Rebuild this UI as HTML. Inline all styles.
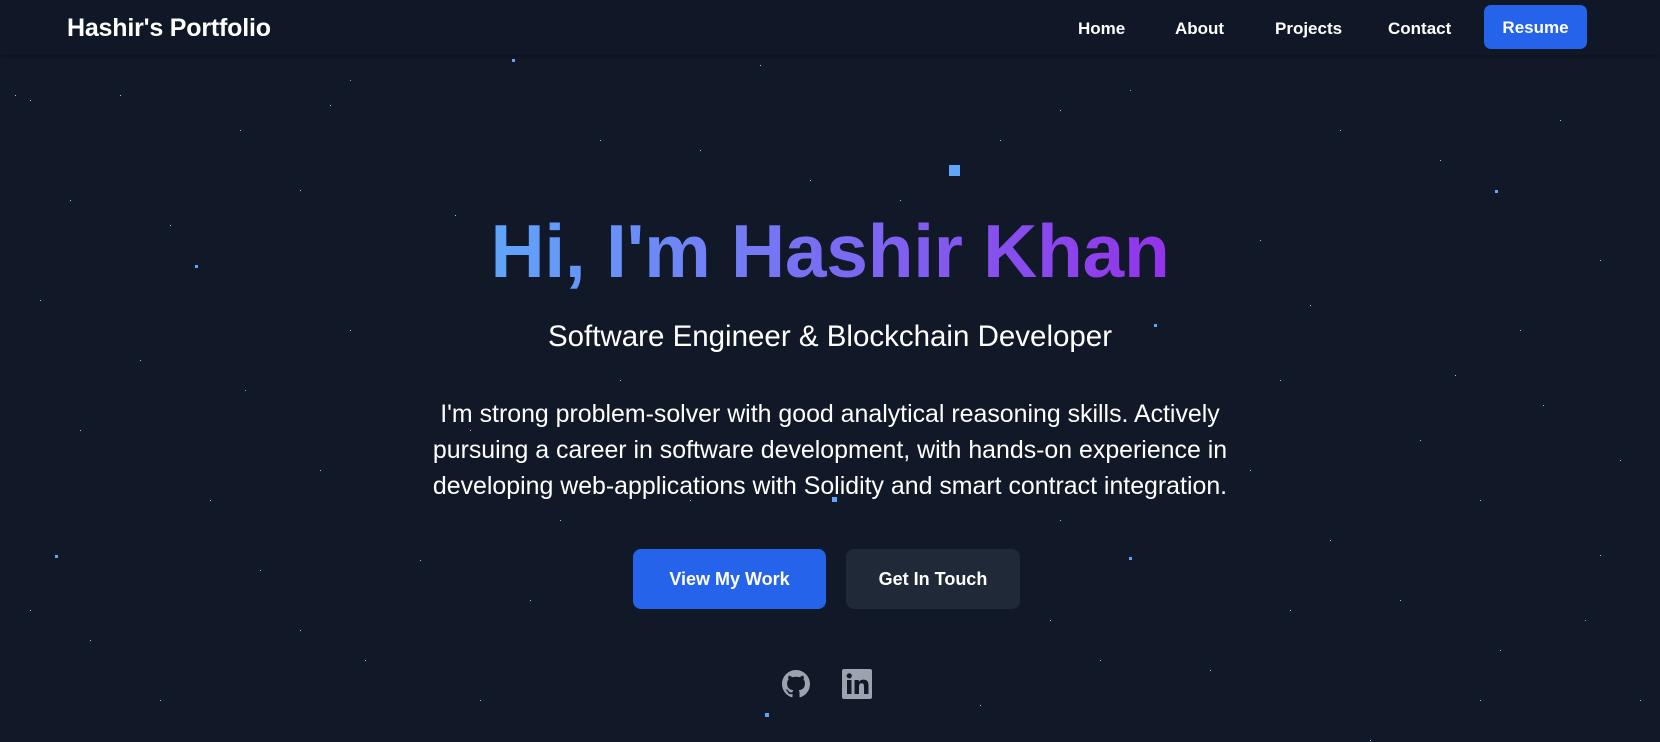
<!DOCTYPE html>
<html><head><meta charset="utf-8"><style>
*{margin:0;padding:0;box-sizing:border-box}
body{width:1660px;height:742px;overflow:hidden;background:#111827;font-family:"Liberation Sans",sans-serif;color:#fff;position:relative}
nav{position:absolute;top:0;left:0;width:1660px;height:55px;background:#101828;box-shadow:0 1px 3px rgba(0,0,0,.3)}
.logo{position:absolute;left:67px;top:14px;font-size:25px;font-weight:700;letter-spacing:-0.2px}
.nl{position:absolute;top:19px;font-size:17px;font-weight:600}
.res{position:absolute;left:1484px;top:5px;width:103px;height:44px;background:#2563eb;border-radius:7px;font-size:17px;font-weight:600;text-align:center;line-height:46px}
.stars{position:absolute;left:0;top:0;width:1px;height:1px;background:transparent}
h1{position:absolute;left:0;width:1660px;top:206px;text-align:center;font-size:75px;font-weight:700;letter-spacing:-0.3px;line-height:90px}
h1 span{background:linear-gradient(90deg,#60a5fa,#9333ea);-webkit-background-clip:text;background-clip:text;color:transparent}
.sub{position:absolute;left:0;width:1660px;top:319px;text-align:center;font-size:29.5px;line-height:36px}
.p{position:absolute;left:280px;width:1100px;top:396px;text-align:center;font-size:24.9px;line-height:36px}
.btn{position:absolute;top:549px;height:60px;border-radius:8px;font-size:18px;font-weight:700;text-align:center;line-height:60px}
</style></head><body>
<div class="stars" style="box-shadow:
513px 60px 0 1px #60a5fa,120px 95px #93c5fd,240px 130px #93c5fd,30px 100px #93c5fd,350px 80px #60a5fa,760px 65px #93c5fd,900px 200px #93c5fd,1130px 90px #60a5fa,1496px 191px 0 1px #60a5fa,196px 266px 0 1px #60a5fa,455px 215px #93c5fd,170px 225px #93c5fd,1155px 325px 0 1px #60a5fa,1310px 305px #93c5fd,1455px 375px #93c5fd,1543px 405px #93c5fd,245px 390px #60a5fa,80px 430px #93c5fd,320px 470px #93c5fd,1250px 470px #93c5fd,1480px 500px #93c5fd,1130px 558px 0 1px #60a5fa,56px 556px 0 1px #60a5fa,1600px 555px #93c5fd,1585px 620px #60a5fa,1370px 740px #93c5fd,90px 640px #93c5fd,365px 660px #93c5fd,530px 600px #93c5fd,1050px 620px #93c5fd,1210px 670px #93c5fd,700px 150px #93c5fd,1000px 140px #93c5fd,1340px 130px #93c5fd,1600px 260px #93c5fd,620px 380px #93c5fd,1400px 600px #93c5fd,260px 570px #93c5fd,160px 700px #93c5fd,980px 705px #93c5fd,1480px 700px #93c5fd,40px 300px #93c5fd,1560px 120px #93c5fd,300px 190px #93c5fd,1260px 240px #93c5fd,1060px 520px #93c5fd,560px 520px #93c5fd,1210px 420px #93c5fd,420px 560px #93c5fd,1330px 540px #93c5fd,15px 95px #93c5fd,330px 105px #93c5fd,600px 140px #93c5fd,810px 180px #93c5fd,1060px 110px #93c5fd,1440px 160px #93c5fd,70px 200px #93c5fd,350px 330px #93c5fd,140px 360px #93c5fd,470px 430px #93c5fd,1280px 380px #93c5fd,1520px 330px #93c5fd,1620px 460px #93c5fd,210px 500px #93c5fd,690px 500px #93c5fd,1160px 480px #93c5fd,1420px 440px #93c5fd,30px 610px #93c5fd,300px 630px #93c5fd,1100px 660px #93c5fd,1290px 610px #93c5fd,1500px 650px #93c5fd,480px 700px #93c5fd,1640px 700px #93c5fd"></div>
<div style="position:absolute;left:949px;top:165px;width:11px;height:11px;background:#60a5fa"></div>
<div style="position:absolute;left:832px;top:497px;width:5px;height:5px;background:#60a5fa"></div>
<div style="position:absolute;left:765px;top:713px;width:4px;height:4px;background:#60a5fa"></div>
<nav>
<div class="logo">Hashir's Portfolio</div>
<div class="nl" style="left:1078px">Home</div>
<div class="nl" style="left:1175px">About</div>
<div class="nl" style="left:1275px">Projects</div>
<div class="nl" style="left:1388px">Contact</div>
<div class="res">Resume</div>
</nav>
<h1><span>Hi, I'm Hashir Khan</span></h1>
<div class="sub">Software Engineer &amp; Blockchain Developer</div>
<div class="p">I'm strong problem-solver with good analytical reasoning skills. Actively<br>pursuing a career in software development, with hands-on experience in<br>developing web-applications with Solidity and smart contract integration.</div>
<div class="btn" style="left:633px;width:193px;background:#2563eb">View My Work</div>
<div class="btn" style="left:846px;width:174px;background:#1f2937">Get In Touch</div>
<svg style="position:absolute;left:782px;top:670px" width="28" height="28" viewBox="0 0 16 16"><path fill="#9ca3af" d="M8 0C3.58 0 0 3.58 0 8c0 3.54 2.29 6.53 5.47 7.59.4.07.55-.17.55-.38 0-.19-.01-.82-.01-1.49-2.01.37-2.53-.49-2.69-.94-.09-.23-.48-.94-.82-1.13-.28-.15-.68-.52-.01-.53.63-.01 1.08.58 1.23.82.72 1.21 1.87.87 2.33.66.07-.52.28-.87.51-1.07-1.78-.2-3.64-.89-3.64-3.95 0-.87.31-1.59.82-2.15-.08-.2-.36-1.02.08-2.12 0 0 .67-.21 2.2.82.64-.18 1.32-.27 2-.27.68 0 1.36.09 2 .27 1.53-1.04 2.2-.82 2.2-.82.44 1.1.16 1.92.08 2.12.51.56.82 1.27.82 2.15 0 3.07-1.87 3.75-3.65 3.95.29.25.54.73.54 1.48 0 1.07-.01 1.93-.01 2.2 0 .21.15.46.55.38A8.013 8.013 0 0016 8c0-4.42-3.58-8-8-8z"/></svg>
<svg style="position:absolute;left:842px;top:669px" width="30" height="30" viewBox="0 0 30 30"><rect width="30" height="30" rx="2" fill="#9ca3af"/><rect x="5" y="11" width="4.5" height="14" fill="#111827"/><circle cx="7.25" cy="6.8" r="2.6" fill="#111827"/><path fill="#111827" d="M12.5 11h4.3v2c.7-1.3 2.3-2.4 4.6-2.4 4.3 0 5.1 2.7 5.1 6.3V25h-4.5v-7.2c0-1.7-.1-3.6-2.3-3.6-2.3 0-2.7 1.7-2.7 3.5V25h-4.5z"/></svg>
</body></html>
